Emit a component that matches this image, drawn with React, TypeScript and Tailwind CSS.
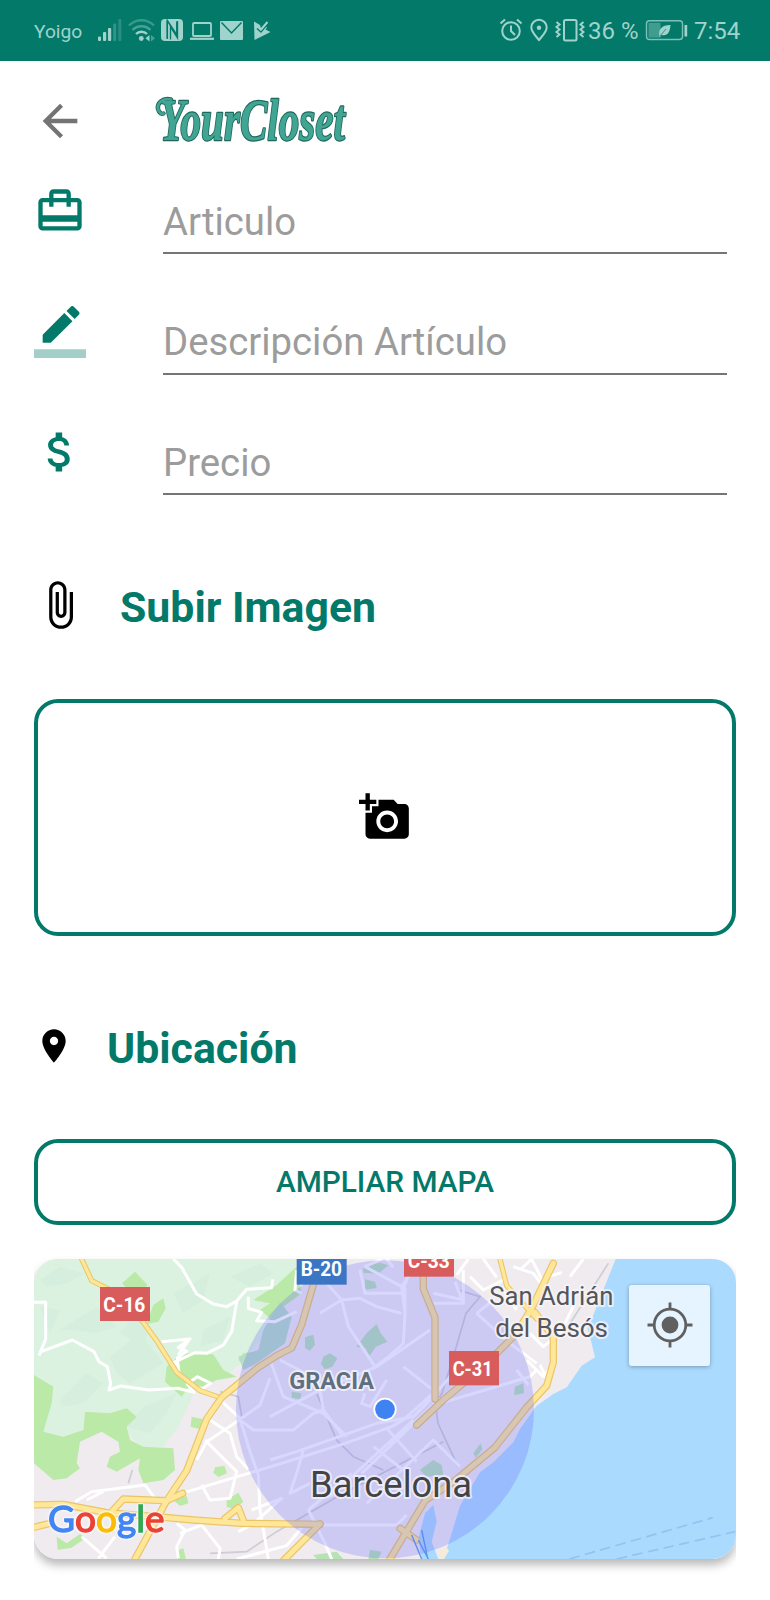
import React from 'react';

type IconProps = { className?: string; children: React.ReactNode };

function Icon({ className, children }: IconProps) {
  return (
    <svg viewBox="0 0 24 24" fill="currentColor" className={'block shrink-0 ' + (className ?? '')}>
      {children}
    </svg>
  );
}

function StatusBar() {
  return (
    <div className="flex h-[60.5px] shrink-0 items-center bg-[#03796a] text-[#9fd3cb]">
      <span className="ml-[34px] mt-[3px] w-[48px] whitespace-nowrap text-[19.2px] leading-6">Yoigo</span>
      <svg className="ml-[14px] h-10 w-[180px]" viewBox="96 10 180 40" fill="none">
        <g fill="currentColor">
          <rect x="98" y="36.5" width="3" height="4.5" rx="1" />
          <rect x="103" y="32" width="3.2" height="9" rx="1" />
          <rect x="108" y="28" width="3.2" height="13" rx="1" />
          <rect x="113.2" y="23.5" width="3" height="17.5" rx="1" opacity=".3" />
          <rect x="118.3" y="19" width="3" height="22" rx="1" opacity=".25" />
        </g>
        <g stroke="currentColor" strokeWidth="2.4">
          <path d="M129 25.500c7-7 18-7 25 0" opacity=".35" />
          <path d="M132.500 30c5-5 13-5 18 0" opacity=".45" />
          <path d="M136 34c3-3 8-3 11 0" />
        </g>
        <circle cx="141.3" cy="38.5" r="2.4" fill="currentColor" />
        <path d="M149.500 35v6.500l-4-3.200z" fill="currentColor" />
        <path d="M151 35v6.500l4-3.200z" fill="currentColor" opacity=".45" />
        <rect x="161" y="19" width="22" height="22" rx="4" fill="currentColor" />
        <path d="M167.300 38.500V20.500L176.800 35V21.500" stroke="#03796a" strokeWidth="1.5" />
        <path d="M167.300 21v18" stroke="#03796a" strokeWidth="1.3" />
        <path d="M170.500 39.500V27l7 11V21" stroke="#03796a" strokeWidth="1.3" />
        <rect x="193" y="23" width="18" height="13" rx="1" stroke="currentColor" strokeWidth="1.8" />
        <path d="M190 38.800h24" stroke="currentColor" strokeWidth="2.2" />
        <rect x="220" y="21" width="23" height="19" rx="1" fill="currentColor" />
        <path d="M221.500 22.500l10 10.500 10-10.500" stroke="#03796a" strokeWidth="1.5" />
        <path d="M254 21.500l6 3.500 1 4 4-3.500 2 2-1.500 2 5 2.500-16 8z" fill="currentColor" />
        <path d="M257 28.500l4 3.500 8-9.500" stroke="#03796a" strokeWidth="1.4" />
        <path d="M258.500 27l2.500 2.500 6.500-7.500" stroke="currentColor" strokeWidth="2" />
      </svg>
      <svg className="ml-[223px] h-10 w-[86px]" viewBox="499 10 86 40" fill="none" stroke="currentColor" strokeWidth="2">
        <circle cx="511" cy="31" r="8.8" />
        <path d="M511 25.500v5.500l4 4M500.500 23.500l4.500-4M521.500 23.500l-4.500-4" />
        <path d="M539 40c-4.500-5.500-7.700-8.500-7.700-12.600a7.700 7.700 0 0 1 15.400 0C546.700 31.500 543.500 34.500 539 40z" />
        <circle cx="539" cy="27.8" r="2.2" fill="currentColor" stroke="none" />
        <rect x="564" y="20" width="12.5" height="20.5" rx="1.5" />
        <path d="M556.500 22l3 2.500-3 2.500 3 2.500-3 2.500 3 2.500-3 2.500M583.500 22l-3 2.500 3 2.500-3 2.500 3 2.500-3 2.500 3 2.500" strokeWidth="2" />
      </svg>
      <span className="ml-[3px] mt-[1px] w-[54px] whitespace-nowrap text-[24px] leading-7">36 %</span>
      <svg className="ml-[2px] h-10 w-[46px]" viewBox="643 10 46 40" fill="none">
        <rect x="645.5" y="20.8" width="36" height="18.7" rx="3" stroke="currentColor" strokeWidth="1.4" opacity=".8" />
        <rect x="647.5" y="22.8" width="12" height="14.8" fill="currentColor" opacity=".4" />
        <path d="M658.500 36.500c-1.500-7 2-11.500 11-11.500-.5 7-3 11.500-9 10l-1.500 2z" fill="currentColor" />
        <path d="M659 36l6-7" stroke="#03796a" strokeWidth=".7" />
        <rect x="683.5" y="25" width="2.7" height="11.5" fill="currentColor" />
      </svg>
      <span className="ml-[4px] mt-[1px] whitespace-nowrap text-[24px] leading-7">7:54</span>
    </div>
  );
}

function Header() {
  return (
    <header className="flex h-[118.5px] items-start pl-[34px] pt-[34px]">
      <Icon className="h-[52px] w-[52px] text-[#747474]">
        <path d="M20 11H7.830l5.590-5.590L12 4l-8 8 8 8 1.410-1.410L7.830 13H20v-2z" />
      </Icon>
      <svg className="-mt-1 ml-[66px] h-[64px] w-[230px] overflow-visible" viewBox="152 90 230 64">
        <path d="M171 98.500c-9-2-14 4-13 9.500 1 4 4 5.500 5.500 4.500" fill="none" stroke="#20685e" strokeWidth="4.5" strokeLinecap="round" />
        <text
          x="160"
          y="138.5"
          textLength="185"
          lengthAdjust="spacingAndGlyphs"
          className="font-['Liberation_Serif',serif] text-[60px] font-bold italic"
          fill="#40a592"
          stroke="#20685e"
          strokeWidth="2.4"
          strokeLinejoin="round"
          paintOrder="stroke"
        >
          YourCloset
        </text>
        <path d="M171 98.500c-9-2-14 4-13 9.500 1 4 4 5.500 5.500 4.500" fill="none" stroke="#40a592" strokeWidth="2.8" strokeLinecap="round" />
      </svg>
    </header>
  );
}

function Field({ label, icon }: { label: string; icon: React.ReactNode }) {
  return (
    <div className="flex h-[120.5px] items-start pl-[34px]">
      <div className="pt-[6px]">{icon}</div>
      <div className="ml-[77px] flex h-[75px] w-[564px] items-end border-b-2 border-[#757575] pb-[8.5px]">
        <span className="whitespace-nowrap text-[38.3px] leading-[45px] text-[#9c9c9c]">{label}</span>
      </div>
    </div>
  );
}

const teal = 'h-[52px] w-[52px] text-[#03796a]';

function CityMap() {
  return (
    <svg viewBox="12 27 2106 900" className="block h-[300px] w-[702px] font-[Roboto,sans-serif]" fill="none">
      <rect x="12" y="27" width="2106" height="900" fill="#efebee" />
      {/* hills and parks */}
      <path
        fill="#dcf2e1"
        d="M12 27H800L790 110 750 150 700 260 640 330 600 370 560 360 500 400 485 445 445 530 400 590 330 590 290 545 310 500 240 500 165 490 155 555 40 560 30 520 65 460 12 380z"
      />
      <g fill="#cde8d6" opacity=".4">
        <path d="M30 90l60-40 70 20-50 30-60 10zM90 240l110-70 60 60-60 20-70-10zM240 320l90-70 70 90-100 60-40-30zM90 450l80-80 50 30-60 60-60 10zM430 130l110-60-20 80-60 40zM520 240l80-40-20 70-70 20zM340 470l100-40-30 60-50 60-70-20zM600 80l90-40 40 30-70 40zM30 170l60 10-30 70zM310 200l50 30-20 60-70-40z" />
      </g>
      <g fill="#bbe9a8">
        <path d="M12 375L70 410 65 460 40 545 100 560 160 540 165 485 240 490 290 475 320 500 290 530 300 570 340 590 430 595 435 660 400 690 340 700 325 660 330 625 260 665 230 650 240 620 270 605 265 575 215 545 150 575 140 640 150 655 110 685 70 690 12 640z" />
        <path d="M276 100L315 65 353 105 330 125 290 115zM370 165L400 145 407 175 385 215 350 222z" />
        <path d="M410 350L455 310 550 313 580 360 620 380 560 390 520 410 480 405 455 440 405 395z" />
        <path d="M485 500l35 8-10 30-28-8zM555 652l28-5 8 22-25 12-16-12zM590 750l35-22 15 28-28 20-22-5zM430 750l40-12 5 22-25 8zM80 860l30 20 40-28 18 12-45 30-40 5zM445 900l15-5 8 32h-25z" />
        <path d="M670 150L740 105 800 50 815 130 760 170 720 205 690 180 720 160zM640 310l70-10-60 50-25-20z" />
      </g>
      <path d="M750 155l35 45-20 80-85 60-40 20-15-40 60-20 15-60z" fill="#b5dec4" />
      {/* sea */}
      <path
        fill="#abdaff"
        d="M1757 27H2118V927H1240l20-60 30-100 60-100 40-30 60-60 20-40 50-70 50-35 40-20 45-65 40-25-12-50-10-35z"
      />
      <path d="M1185 790l25-25 10 50-15 60 20 52h-50l-10-60z" fill="#abdaff" />
      <path d="M1232 927l-5-25 22-10 8 10-15 25z" fill="#f4ecd8" />
      <path d="M1618 927l430-124M1760 927l355-82" stroke="#93c3ee" strokeWidth="5" strokeDasharray="32 16" />
      {/* city parks */}
      <g fill="#b7e3b4">
        <path d="M1010 250l30-28 12 28 20 25-35 15-20 30-10-25-28-5zM825 262l25-8 5 30-15 18-15-8zM880 320l20-10 22 15-15 25-22 8-12-15zM1000 50l50-12 25 8-30 25-45-3zM1005 88l30 8 5 18-35 5zM1210 630l25 15 5 30-50 5-20-20zM1330 610l22-30 5 18-20 25zM1455 410l25-10 2 30-30 5zM1020 900l35 5-10 22h-30zM850 915l70-10 20 22h-80zM785 425l30 5-5 18-25-5z" />
      </g>
      {/* railways */}
      <g stroke="#cccdd6" strokeWidth="5">
        <path d="M570 425l55 15 15 90M295 700l12-40M540 910l110-5 90-60 200-115 300-155M1285 120l65 20-42 50-32 110-40 130-20 30 8 60 60 130M860 430l60 140 50 50 90 40M1735 40l-140 220" />
      </g>
      {/* minor streets */}
      <g stroke="#fff" strokeWidth="9" strokeLinejoin="round">
        <path d="M12 157h35v110l-20 50M27 307l100-37 65 35 15 30 25 15 10 50-5 20 35-12 85 12 85-5 50 12-20-25 30-22 40 20-30 20 50 15" />
        <path d="M430 27l25 25 45 80 50 30 40 8 30-17 30-35 75-5 3-25M620 155l-15 90-25 40-50 25-35-2-65 30 15 10M395 275l85-8-35 25 25 12-28 20 5 45M480 265l-35 50M655 140v35l40 12-15 25 55 3 65-30" />
        <path d="M560 440l70 65 30 100 25 70 5 105 25 147M540 510l60 40 20 70 35 38M525 570l95 95-20 80-60 5-25-45M455 730l300-90 190-60 140-50 60-35M500 630l30-55 90-60 70-50 30-80M665 780l90-35-90 80-40 20" />
        <path d="M135 755l50-30 160-20 30 40M170 750l50-25M155 860l75 65M255 860l-50 65M440 820l25 20-25 50 5 35M450 850l65-25 55 70-5 35M620 927l150-40 50-60M630 510l40 30h120l60-50 30-10" />
        <path d="M800 60l-5 60 20 10M890 100l45 50 20 80 60 90 20 30 35-25 50-45 5-90V115l-120-65 50-23M935 150l-65 40M935 150l55-5 50 25 75 20M990 60l15 70h110l15-40 15-63M1070 27l20 25M1125 190l-10-80 40-60" />
        <path d="M720 500l130-70 190-80 160-110M720 330l40 110 120 50 70 70M750 330l115 60 15 90 60 80M720 630l80-25 240-85 110-20 40-40 80-90M1005 430l-10 30 25 10 50-80M1120 350l95 75-90 80M1070 535l90 100M1030 590l90 70M1075 580l75-65M995 670l235-225M900 740l250-230M1010 760l200-190 80 80M835 780l130-110M835 780l50 100 20 47M870 825h230l30-30" />
        <path d="M820 600l-20 70-20 60 60-30M1230 460l270-80 20-20M1275 95l25 65h-90M1300 60v100M1340 190l100 90 80 60M1210 130l90 20M1420 120l40 60M1340 190l50-40" />
        <path d="M1280 75l35-48M1320 80l40 40 60-30M1360 27l40 55M1470 60l35-33 30 60 60-20M1620 80l40-53M1450 50l60 20 30 40M1500 250l40 40 50-40 40-80M1490 330l50 50 40-50M1530 345l20 40M1460 360l35 45" />
      </g>
      {/* arterials */}
      <g strokeLinejoin="round" strokeLinecap="round">
        {[
          { color: '#ebc468', wide: 22, thin: 16 },
          { color: '#fee798', wide: 15, thin: 10 },
        ].map((s) => (
          <g key={s.color} stroke={s.color}>
            <g strokeWidth={s.wide}>
              <path d="M315 927l30-55 65-120 60-90 60-155 45-65 110-90 60-38 40-20 30-70 35-120 10-77" />
              <path d="M0 765l100-2 130 25 150 12 110 10 145 10 235 3" />
              <path d="M245 785l35-38 130 5 48-22M0 835l60-15" />
              <path d="M585 805l40-32 15 38M870 822l-110 110" />
              <path d="M1180 27v90l35 85v245M1160 525l80-75 120-100 95-95 50-80 65-135" />
              <path d="M1080 927l60-100 45-75 90-60 120-100 95-120 60-65 20-70v-75l-55-75" />
              <path d="M1110 835l50 35" />
            </g>
            <g strokeWidth={s.thin}>
              <path d="M155 27l30 65 100 50 95 130 60 95 70 55 50 17" />
              <path d="M1410 27l20 80 90 100" />
            </g>
          </g>
        ))}
      </g>
      <path d="M1145 855l30 72M1175 840l18 85M1165 870l30 57" stroke="#5d95eb" strokeWidth="4" />
      {/* search radius */}
      <circle cx="1065" cy="478" r="447" fill="#6464ff" fillOpacity=".25" />
      <circle cx="1065" cy="478" r="35" fill="#fff" />
      <circle cx="1065" cy="478" r="29.5" fill="#3f82f1" />
      {/* road shields */}
      <rect x="210" y="111" width="150" height="102" fill="#d95c5c" />
      <rect x="800" y="0" width="150" height="104" fill="#3b76c4" />
      <rect x="1122" y="0" width="150" height="80" fill="#d95c5c" />
      <rect x="1257" y="303" width="150" height="103" fill="#d95c5c" />
      <g className="text-[60px] font-bold" fill="#fff">
        <text x="220" y="187" textLength="126" lengthAdjust="spacingAndGlyphs">C-16</text>
        <text x="812" y="79" textLength="124" lengthAdjust="spacingAndGlyphs">B-20</text>
        <text x="1133" y="53" textLength="126" lengthAdjust="spacingAndGlyphs">C-33</text>
        <text x="1268" y="378" textLength="120" lengthAdjust="spacingAndGlyphs">C-31</text>
      </g>
      {/* place names */}
      <g stroke="#f7f5fb" strokeOpacity=".75" strokeWidth="12" strokeLinejoin="round" paintOrder="stroke">
        <text x="778" y="418" textLength="254" lengthAdjust="spacingAndGlyphs" className="text-[72px] font-bold" fill="#5f6f7d">
          GRACIA
        </text>
        <text x="840" y="742" textLength="486" lengthAdjust="spacingAndGlyphs" className="text-[113px]" fill="#424345">
          Barcelona
        </text>
        <text x="1378" y="166" textLength="372" lengthAdjust="spacingAndGlyphs" className="text-[80px]" fill="#54565a">
          San Adrián
        </text>
        <text x="1396" y="260" textLength="338" lengthAdjust="spacingAndGlyphs" className="text-[80px]" fill="#54565a">
          del Besós
        </text>
      </g>
      {/* white halo comes from a drop shadow so each glyph can keep a stroke of its own colour */}
      <text
        x="54"
        y="847"
        textLength="350"
        lengthAdjust="spacingAndGlyphs"
        className="font-[Lato,sans-serif] text-[112px] [filter:drop-shadow(0_0_3px_#fff)_drop-shadow(0_0_3px_#fff)]"
        strokeWidth="4"
      >
        <tspan fill="#4285f4" stroke="#4285f4">G</tspan>
        <tspan fill="#ea4335" stroke="#ea4335">o</tspan>
        <tspan fill="#fbbc05" stroke="#fbbc05">o</tspan>
        <tspan fill="#4285f4" stroke="#4285f4">g</tspan>
        <tspan fill="#34a853" stroke="#34a853">l</tspan>
        <tspan fill="#ea4335" stroke="#ea4335">e</tspan>
      </text>
    </svg>
  );
}

export default function App() {
  return (
    <div className="flex h-[1600px] w-[770px] flex-col overflow-hidden bg-white font-[Roboto,'Liberation_Sans',sans-serif]">
      <StatusBar />
      <Header />
      <Field
        label="Articulo"
        icon={
          <Icon className={teal}>
            <path d="M20 6h-3V4c0-1.110-.89-2-2-2H9c-1.110 0-2 .89-2 2v2H4c-1.110 0-2 .89-2 2v11c0 1.110.89 2 2 2h16c1.110 0 2-.89 2-2V8c0-1.110-.89-2-2-2zM9 4h6v2H9V4zm11 15H4v-2h16v2zm0-5H4V8h3v2h2V8h6v2h2V8h3v6z" />
          </Icon>
        }
      />
      <Field
        label="Descripción Artículo"
        icon={
          <Icon className={teal}>
            <path d="M17.750 7L14 3.250l-10 10V17h3.750l10-10zm2.960-2.960c.39-.39.39-1.020 0-1.410L18.370.29c-.39-.39-1.020-.39-1.410 0L15 2.250 18.750 6l1.960-1.960z" />
            <path d="M0 20h24v4H0z" fillOpacity=".36" />
          </Icon>
        }
      />
      <Field
        label="Precio"
        icon={
          <Icon className={teal}>
            <path d="M11.800 10.900c-2.270-.59-3-1.200-3-2.150 0-1.090 1.010-1.850 2.700-1.850 1.780 0 2.440.85 2.500 2.100h2.210c-.07-1.720-1.120-3.300-3.210-3.810V3h-3v2.160c-1.940.42-3.500 1.680-3.500 3.610 0 2.310 1.910 3.460 4.700 4.130 2.500.6 3 1.480 3 2.410 0 .69-.49 1.790-2.700 1.790-2.060 0-2.870-.92-2.980-2.100h-2.200c.12 2.190 1.760 3.420 3.680 3.830V21h3v-2.150c1.950-.37 3.500-1.500 3.500-3.550 0-2.840-2.430-3.810-4.700-4.400z" />
          </Icon>
        }
      />
      <div className="mt-[38.5px] flex h-[52px] items-center pl-[34px]">
        <Icon className="h-[52px] w-[52px] text-black">
          <path d="M16.500 6v11.500c0 2.210-1.790 4-4 4s-4-1.790-4-4V5c0-1.380 1.120-2.500 2.500-2.500s2.500 1.120 2.500 2.500v10.500c0 .55-.45 1-1 1s-1-.45-1-1V6H10v9.500c0 1.380 1.120 2.500 2.500 2.500s2.500-1.120 2.500-2.500V5c0-2.210-1.790-4-4-4S7 2.790 7 5v12.500c0 3.040 2.460 5.500 5.500 5.500s5.500-2.460 5.500-5.500V6h-1.500z" />
        </Icon>
        <h2 className="ml-[34px] mt-[3px] whitespace-nowrap text-[42.8px] font-bold leading-[50px] text-[#03796a]">Subir Imagen</h2>
      </div>
      <button className="mx-[34px] mt-[67.5px] flex h-[237px] shrink-0 items-center justify-center rounded-[24px] border-4 border-[#03796a]">
        <Icon className="h-[52px] w-[52px] text-black">
          <path d="M3 4V1h2v3h3v2H5v3H3V6H0V4h3zm3 6V7h3V4h7l1.830 2H21c1.100 0 2 .9 2 2v12c0 1.100-.9 2-2 2H5c-1.100 0-2-.9-2-2V10h3zm7 9c2.760 0 5-2.240 5-5s-2.240-5-5-5-5 2.240-5 5 2.240 5 5 5zm-3.200-5c0 1.770 1.430 3.200 3.200 3.200s3.200-1.430 3.200-3.200-1.430-3.200-3.200-3.200-3.200 1.430-3.200 3.200z" />
        </Icon>
      </button>
      <div className="mt-[86px] flex h-[52px] items-center pl-[33.5px]">
        <Icon className="-mt-[4px] h-[40px] w-[40px] text-black">
          <path d="M12 2C8.130 2 5 5.130 5 9c0 5.250 7 13 7 13s7-7.750 7-13c0-3.870-3.130-7-7-7zm0 9.500c-1.380 0-2.500-1.120-2.500-2.500s1.120-2.500 2.500-2.500 2.500 1.120 2.500 2.500-1.120 2.500-2.500 2.500z" />
        </Icon>
        <h2 className="ml-[33.5px] mt-[1px] whitespace-nowrap text-[42.8px] font-bold leading-[50px] text-[#03796a]">Ubicación</h2>
      </div>
      <button className="mx-[34px] mt-[65px] flex h-[86px] shrink-0 items-center justify-center rounded-[24px] border-4 border-[#03796a] pt-[1px] text-[29.8px] font-medium text-[#03796a]">
        AMPLIAR MAPA
      </button>
      <div className="mx-[34px] mt-[30px] shrink-0 overflow-hidden pb-[30px] pt-[4px]">
        <div className="relative h-[300px] w-[702px] rounded-[24px] shadow-[0_6px_10px_rgba(0,0,0,0.28)]">
          <div className="overflow-hidden rounded-[24px]">
            <CityMap />
          </div>
          <button className="absolute right-[26px] top-[26px] flex h-[81px] w-[81px] items-center justify-center rounded-[3px] bg-white/70 shadow-[0_1px_4px_rgba(0,0,0,0.3)]">
            <svg viewBox="-24 -24 48 48" className="h-[48px] w-[48px]" fill="none" stroke="#606060" strokeWidth="2.8">
              <circle r="15.8" />
              <circle r="8.4" fill="#606060" stroke="none" />
              <path d="M0-22.500V-16M0 22.500V16M-22.500 0H-16M22.500 0H16" />
            </svg>
          </button>
        </div>
      </div>
    </div>
  );
}
